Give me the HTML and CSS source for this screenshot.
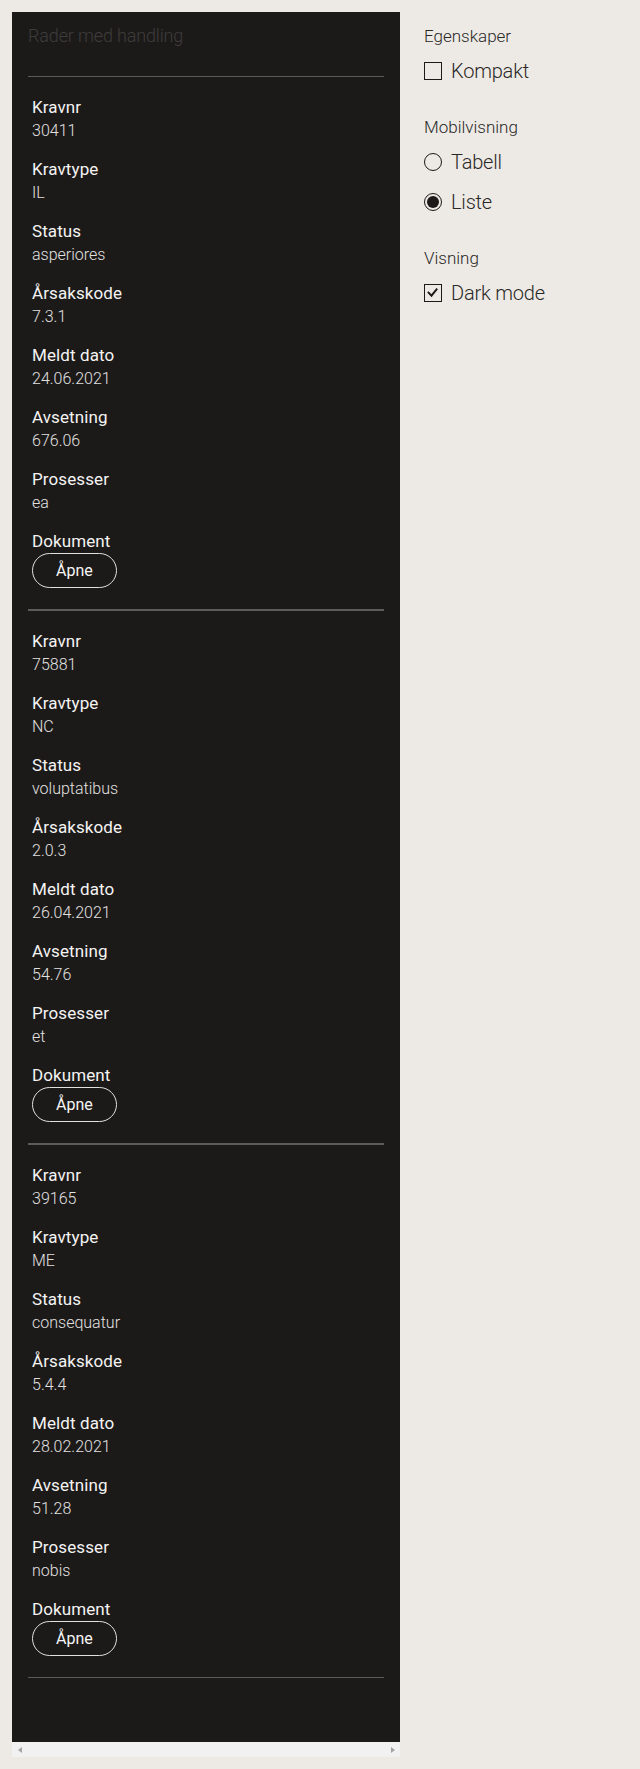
FILE: index.html
```html
<!DOCTYPE html>
<html lang="no">
<head>
<meta charset="utf-8">
<title>Rader med handling</title>
<link rel="stylesheet" href="styles.css">
</head>
<body>
<main class="panel">
  <div class="content">
    <div class="caption">Rader med handling</div>
    <div class="card">
      <div class="field"><div class="label">Kravnr</div><div class="value">30411</div></div>
      <div class="field"><div class="label">Kravtype</div><div class="value">IL</div></div>
      <div class="field"><div class="label">Status</div><div class="value">asperiores</div></div>
      <div class="field"><div class="label">Årsakskode</div><div class="value">7.3.1</div></div>
      <div class="field"><div class="label">Meldt dato</div><div class="value">24.06.2021</div></div>
      <div class="field"><div class="label">Avsetning</div><div class="value">676.06</div></div>
      <div class="field"><div class="label">Prosesser</div><div class="value">ea</div></div>
      <div class="field"><div class="label">Dokument</div><button class="btn">Åpne</button></div>
    </div>
    <div class="card">
      <div class="field"><div class="label">Kravnr</div><div class="value">75881</div></div>
      <div class="field"><div class="label">Kravtype</div><div class="value">NC</div></div>
      <div class="field"><div class="label">Status</div><div class="value">voluptatibus</div></div>
      <div class="field"><div class="label">Årsakskode</div><div class="value">2.0.3</div></div>
      <div class="field"><div class="label">Meldt dato</div><div class="value">26.04.2021</div></div>
      <div class="field"><div class="label">Avsetning</div><div class="value">54.76</div></div>
      <div class="field"><div class="label">Prosesser</div><div class="value">et</div></div>
      <div class="field"><div class="label">Dokument</div><button class="btn">Åpne</button></div>
    </div>
    <div class="card last">
      <div class="field"><div class="label">Kravnr</div><div class="value">39165</div></div>
      <div class="field"><div class="label">Kravtype</div><div class="value">ME</div></div>
      <div class="field"><div class="label">Status</div><div class="value">consequatur</div></div>
      <div class="field"><div class="label">Årsakskode</div><div class="value">5.4.4</div></div>
      <div class="field"><div class="label">Meldt dato</div><div class="value">28.02.2021</div></div>
      <div class="field"><div class="label">Avsetning</div><div class="value">51.28</div></div>
      <div class="field"><div class="label">Prosesser</div><div class="value">nobis</div></div>
      <div class="field"><div class="label">Dokument</div><button class="btn">Åpne</button></div>
    </div>
  </div>
  <div class="hscroll">
    <span class="sbtn"><span class="arrow-left"></span></span>
    <span class="sbtn"><span class="arrow-right"></span></span>
  </div>
</main>
<aside class="side">
  <section class="group">
    <div class="legend">Egenskaper</div>
    <div class="options">
      <div class="option"><span class="box"></span><span>Kompakt</span></div>
    </div>
  </section>
  <section class="group">
    <div class="legend">Mobilvisning</div>
    <div class="options">
      <div class="option"><span class="radio"></span><span>Tabell</span></div>
      <div class="option"><span class="radio on"></span><span>Liste</span></div>
    </div>
  </section>
  <section class="group">
    <div class="legend">Visning</div>
    <div class="options">
      <div class="option"><span class="box"><svg class="check" viewBox="0 0 18 18" width="16" height="16"><path d="M4 8.5 L7.3 12 L13 5" fill="none" stroke="#1c1a19" stroke-width="2.2" stroke-linecap="square"/></svg></span><span>Dark mode</span></div>
    </div>
  </section>
</aside>
</body>
</html>
```
FILE: styles.css
```css
html, body {
  margin: 0;
  padding: 0;
}
body {
  margin: 12px;
  background: #edeae5;
  font-family: Roboto, "Liberation Sans", sans-serif;
  display: flex;
  align-items: flex-start;
  gap: 24px;
}
.panel {
  width: 388px;
  flex: none;
  display: flex;
  flex-direction: column;
  background: #1c1a19;
}
.content {
  padding: 12px 16px 64px 16px;
}
.caption {
  font-size: 18px;
  line-height: 24px;
  font-weight: 300;
  color: #3e3c3b;
  letter-spacing: -0.15px;
  padding-bottom: 28px;
  border-bottom: 1px solid #5c5b5a;
}
.card {
  padding: 18px 4px 21px 4px;
  border-bottom: 2px solid #5c5b5a;
  display: flex;
  flex-direction: column;
  gap: 14px;
}
.card.last {
  border-bottom-width: 1px;
}
.field {
  display: flex;
  flex-direction: column;
  align-items: flex-start;
}
.label {
  font-size: 17px;
  line-height: 24px;
  font-weight: 400;
  color: #f4f3f2;
  letter-spacing: 0.1px;
}
.value {
  font-size: 16px;
  line-height: 24px;
  font-weight: 300;
  color: #e2e1e0;
}
.btn {
  height: 35px;
  padding: 0 23px;
  border: 1px solid #e2e1e0;
  border-radius: 18px;
  background: transparent;
  color: #f5f5f5;
  font-family: Roboto, "Liberation Sans", sans-serif;
  font-size: 16px;
  font-weight: 400;
  line-height: 24px;
}
.hscroll {
  height: 15px;
  background: #f1f1f1;
  display: flex;
  justify-content: space-between;
}
.sbtn {
  width: 15px;
  height: 15px;
  display: flex;
  align-items: center;
  justify-content: center;
}
.arrow-left {
  width: 0;
  height: 0;
  border-top: 3.5px solid transparent;
  border-bottom: 3.5px solid transparent;
  border-right: 4px solid #a3a3a3;
}
.arrow-right {
  width: 0;
  height: 0;
  border-top: 3.5px solid transparent;
  border-bottom: 3.5px solid transparent;
  border-left: 4px solid #a3a3a3;
}
.side {
  padding-top: 12px;
  color: #2a2827;
  display: flex;
  flex-direction: column;
  gap: 32px;
}
.legend {
  font-size: 17px;
  line-height: 24px;
  font-weight: 300;
  margin-bottom: 11px;
}
.options {
  display: flex;
  flex-direction: column;
  gap: 16px;
}
.option {
  display: flex;
  align-items: center;
  gap: 9px;
  font-size: 20px;
  line-height: 24px;
  font-weight: 300;
  letter-spacing: -0.2px;
}
.box {
  width: 18px;
  height: 18px;
  box-sizing: border-box;
  border: 1.5px solid #1c1a19;
  display: flex;
  align-items: center;
  justify-content: center;
  flex: none;
}
.radio {
  width: 18px;
  height: 18px;
  box-sizing: border-box;
  border: 1.5px solid #1c1a19;
  border-radius: 50%;
  flex: none;
  display: flex;
  align-items: center;
  justify-content: center;
}
.radio.on::after {
  content: "";
  width: 12px;
  height: 12px;
  border-radius: 50%;
  background: #1c1a19;
}
.check {
  display: block;
}
```
